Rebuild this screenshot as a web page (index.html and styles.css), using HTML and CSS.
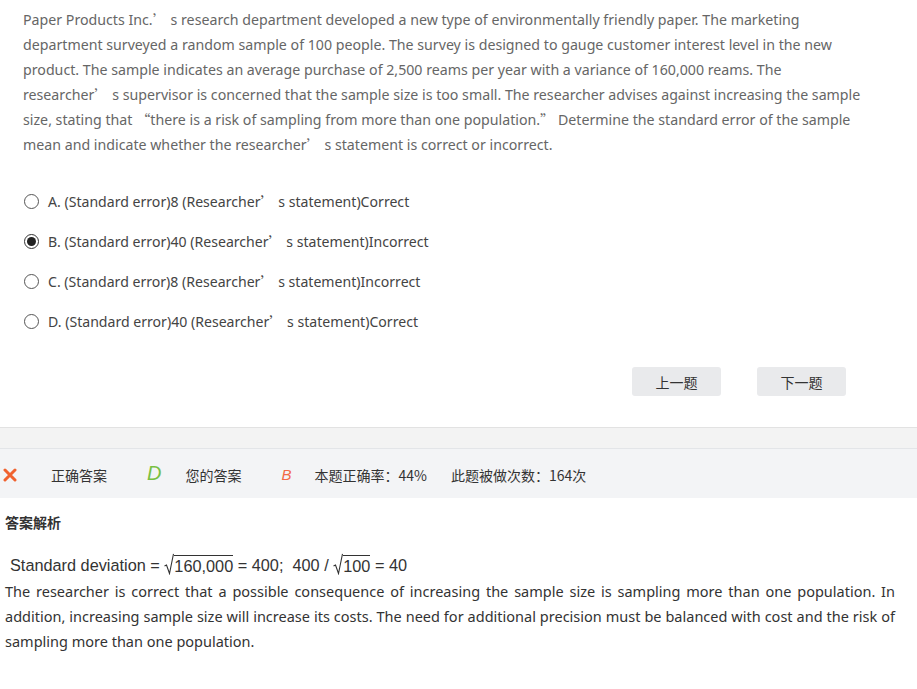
FILE: index.html
```html
<!DOCTYPE html>
<html lang="zh-CN">
<head>
<meta charset="utf-8">
<title>Question</title>
<link rel="stylesheet" href="styles.css">
</head>
<body>
<div class="question">
  <p class="stem">Paper Products Inc.<span class="fw">’</span> s research department developed a new type of environmentally friendly paper. The marketing department surveyed a random sample of 100 people. The survey is designed to gauge customer interest level in the new product. The sample indicates an average purchase of 2,500 reams per year with a variance of 160,000 reams. The researcher<span class="fw">’</span> s supervisor is concerned that the sample size is too small. The researcher advises against increasing the sample size, stating that <span class="fw">“</span>there is a risk of sampling from more than one population.<span class="fw">”</span> Determine the standard error of the sample mean and indicate whether the researcher<span class="fw">’</span> s statement is correct or incorrect.</p>
  <ul class="options">
    <li class="option"><span class="radio"></span><span>A. (Standard error)8 (Researcher<span class="fw">’</span> s statement)Correct</span></li>
    <li class="option"><span class="radio checked"></span><span>B. (Standard error)40 (Researcher<span class="fw">’</span> s statement)Incorrect</span></li>
    <li class="option"><span class="radio"></span><span>C. (Standard error)8 (Researcher<span class="fw">’</span> s statement)Incorrect</span></li>
    <li class="option"><span class="radio"></span><span>D. (Standard error)40 (Researcher<span class="fw">’</span> s statement)Correct</span></li>
  </ul>
  <div class="nav">
    <button class="btn">上一题</button>
    <button class="btn">下一题</button>
  </div>
</div>
<div class="divider"></div>
<div class="stats">
  <svg class="wrong" width="14" height="14" viewBox="0 0 14 14"><path d="M2 2 L12 12 M12 2 L2 12" stroke="#f0622f" stroke-width="3" stroke-linecap="round"/></svg>
  <span class="label l1">正确答案</span>
  <span class="ans correct">D</span>
  <span class="label l2">您的答案</span>
  <span class="ans mine">B</span>
  <span class="label l3">本题正确率：44%</span>
  <span class="label l4">此题被做次数：164次</span>
</div>
<div class="analysis">
  <h4 class="title">答案解析</h4>
  <div class="formula">Standard deviation = <span class="sqrt"><svg class="rad" width="10" height="22" viewBox="0 0 10 22"><path d="M0.5 13 L2.5 12 L5.5 20.5 L9.5 0.8" fill="none" stroke="#333" stroke-width="1.1"/></svg><span class="rad-body">160,000</span></span> = 400;&nbsp; 400 / <span class="sqrt"><svg class="rad" width="10" height="22" viewBox="0 0 10 22"><path d="M0.5 13 L2.5 12 L5.5 20.5 L9.5 0.8" fill="none" stroke="#333" stroke-width="1.1"/></svg><span class="rad-body">100</span></span> = 40</div>
  <p class="explain">The researcher is correct that a possible consequence of increasing the sample size is sampling more than one population. In addition, increasing sample size will increase its costs. The need for additional precision must be balanced with cost and the risk of sampling more than one population.</p>
</div>
</body>
</html>
```
FILE: styles.css
```css
* { box-sizing: border-box; }
body {
  margin: 0;
  font-family: "Noto Sans", "Noto Sans CJK SC", sans-serif;
  background: #fff;
  color: #333;
}
.fw {
  font-family: "Noto Sans CJK SC", sans-serif;
  line-height: 1;
}
.question {
  padding: 7px 0 0 23px;
}
.stem {
  margin: 0;
  padding-right: 55px;
  font-size: 14.2px;
  line-height: 25px;
  color: #666;
}
.options {
  list-style: none;
  margin: 24px 0 0;
  padding: 0;
}
.option {
  display: flex;
  align-items: center;
  height: 40px;
  font-size: 14.1px;
  color: #444;
}
.radio {
  width: 15px;
  height: 15px;
  border: 1px solid #555;
  border-radius: 50%;
  margin: 0 9px 0 1px;
  flex: none;
  display: flex;
  align-items: center;
  justify-content: center;
}
.radio.checked { border-color: #333; }
.radio.checked::after {
  content: "";
  width: 9px;
  height: 9px;
  border-radius: 50%;
  background: #222;
}
.nav {
  display: flex;
  justify-content: flex-end;
  gap: 36px;
  padding: 26px 71px 0 0;
  height: 86px;
}
.btn {
  width: 89px;
  height: 29px;
  border: none;
  border-radius: 3px;
  background: #e9eaec;
  color: #333;
  font-family: "Noto Sans CJK SC", sans-serif;
  font-size: 14px;
  padding: 0;
}
.divider {
  height: 22px;
  border-top: 1px solid #e2e2e2;
  border-bottom: 1px solid #e3e5e8;
  background: #f3f3f3;
}
.stats {
  display: flex;
  align-items: center;
  height: 49px;
  padding: 2px 0 0 3px;
  background: #f3f4f6;
  font-family: "Noto Sans CJK SC", sans-serif;
  font-size: 14px;
  color: #333;
}
.wrong { flex: none; }
.label { white-space: nowrap; }
.l1 { margin-left: 34px; }
.ans {
  font-family: "Liberation Sans", sans-serif;
  font-style: italic;
}
.ans.correct { color: #78c043; font-size: 20px; margin-left: 40px; margin-top: -3px; }
.ans.mine { color: #f26a45; font-size: 15px; margin-left: 40px; }
.l2 { margin-left: 24px; }
.l3 { margin-left: 23px; }
.l4 { margin-left: 24px; }
.analysis {
  padding: 0 22px 0 5px;
}
.title {
  margin: 0;
  padding-top: 14px;
  font-family: "Noto Sans CJK SC", sans-serif;
  font-size: 14px;
  line-height: 20px;
  font-weight: bold;
  color: #333;
}
.formula {
  margin-top: 21px;
  padding-left: 5px;
  font-family: "Liberation Sans", Arial, sans-serif;
  font-size: 16.3px;
  line-height: 22px;
  color: #333;
  display: flex;
  align-items: flex-end;
  white-space: pre;
}
.sqrt {
  display: inline-flex;
  align-items: flex-end;
}
.rad { display: block; margin-bottom: 1px; }
.rad-body {
  border-top: 1px solid #333;
  line-height: 20px;
}
.explain {
  margin: 3px 0 0;
  font-size: 14.5px;
  line-height: 25px;
  color: #333;
  text-align: justify;
}
```
